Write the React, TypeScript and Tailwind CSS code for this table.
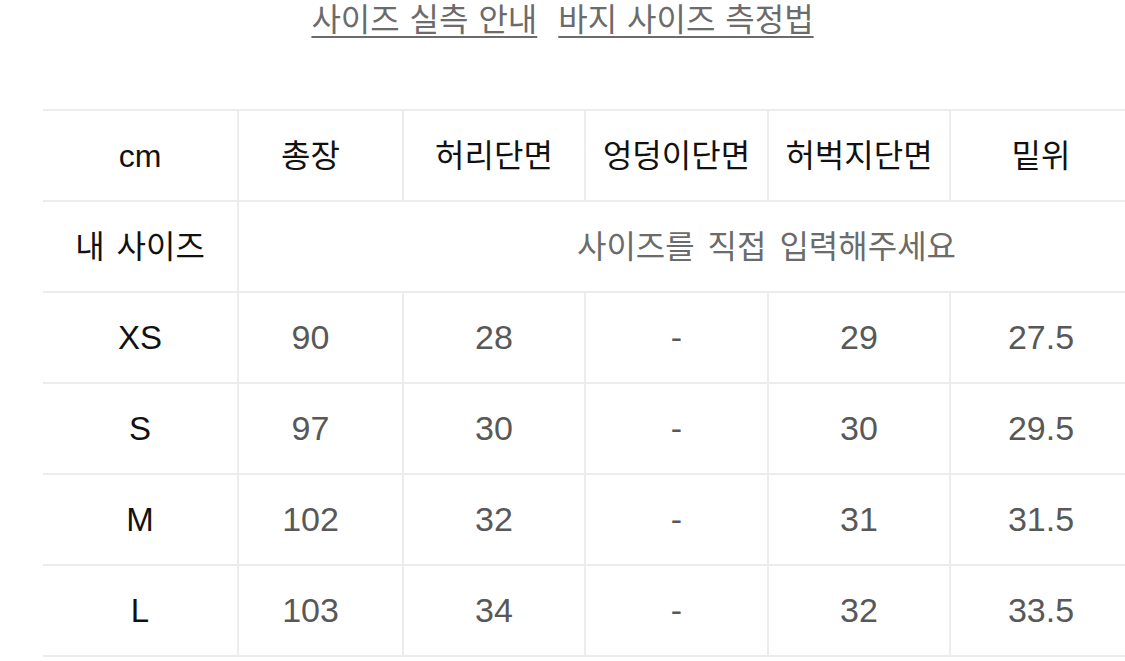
const FONT = "font-['Liberation_Sans','Noto_Sans_CJK_KR',sans-serif]";

type Row = { size: string; values: string[] };

const HEADERS = ["총장", "허리단면", "엉덩이단면", "허벅지단면", "밑위"];

const ROWS: Row[] = [
  { size: "XS", values: ["90", "28", "-", "29", "27.5"] },
  { size: "S", values: ["97", "30", "-", "30", "29.5"] },
  { size: "M", values: ["102", "32", "-", "31", "31.5"] },
  { size: "L", values: ["103", "34", "-", "32", "33.5"] },
];

const cell = "border-2 border-[#ececec] text-center align-middle p-0";

export default function App() {
  return (
    <div className={`w-[1125px] h-[661px] overflow-hidden bg-white ${FONT}`}>
      {/* guide links */}
      <div className="flex justify-center gap-[21px] pt-[1px] text-[32px] leading-[38px] text-[#6b6b6b] [word-spacing:1px]">
        <a className="underline underline-offset-[5px] decoration-2 decoration-[#6b6b6b]">사이즈 실측 안내</a>
        <a className="underline underline-offset-[5px] decoration-2 decoration-[#6b6b6b]">바지 사이즈 측정법</a>
      </div>

      {/* size table */}
      <div className="pl-[43px] pt-[70px]">
        <table className="border-collapse table-fixed w-[1252px]">
          <colgroup>
            <col className="w-[195px]" />
            <col className="w-[165px]" />
            <col className="w-[182px]" />
            <col className="w-[183px]" />
            <col className="w-[182px]" />
            <col className="w-[182px]" />
            <col className="w-[163px]" />
          </colgroup>
          <thead>
            <tr className="h-[91px] text-[32px] text-[#111]">
              <th className={`${cell} border-l-0 font-normal`}>cm</th>
              {HEADERS.map((h, i) => (
                <th key={h} className={`${cell} font-normal ${i === 0 ? "pr-[20px]" : ""}`}>
                  {h}
                </th>
              ))}
              <th className={`${cell} font-normal`}></th>
            </tr>
          </thead>
          <tbody>
            <tr className="h-[91px]">
              <td className={`${cell} border-l-0 text-[32px] text-[#111] [word-spacing:3px]`}>내 사이즈</td>
              <td colSpan={6} className={`${cell} text-[32px] text-[#6b6b6b] [word-spacing:4px]`}>
                사이즈를 직접 입력해주세요
              </td>
            </tr>
            {ROWS.map((r) => (
              <tr key={r.size} className="h-[91px]">
                <td className={`${cell} border-l-0 text-[33px] text-[#111]`}>{r.size}</td>
                {r.values.map((v, i) => (
                  <td
                    key={i}
                    className={`${cell} text-[34px] text-[#585858] ${i === 0 ? "pr-[20px]" : ""}`}
                  >
                    {v}
                  </td>
                ))}
                <td className={cell}></td>
              </tr>
            ))}
          </tbody>
        </table>
      </div>
    </div>
  );
}
